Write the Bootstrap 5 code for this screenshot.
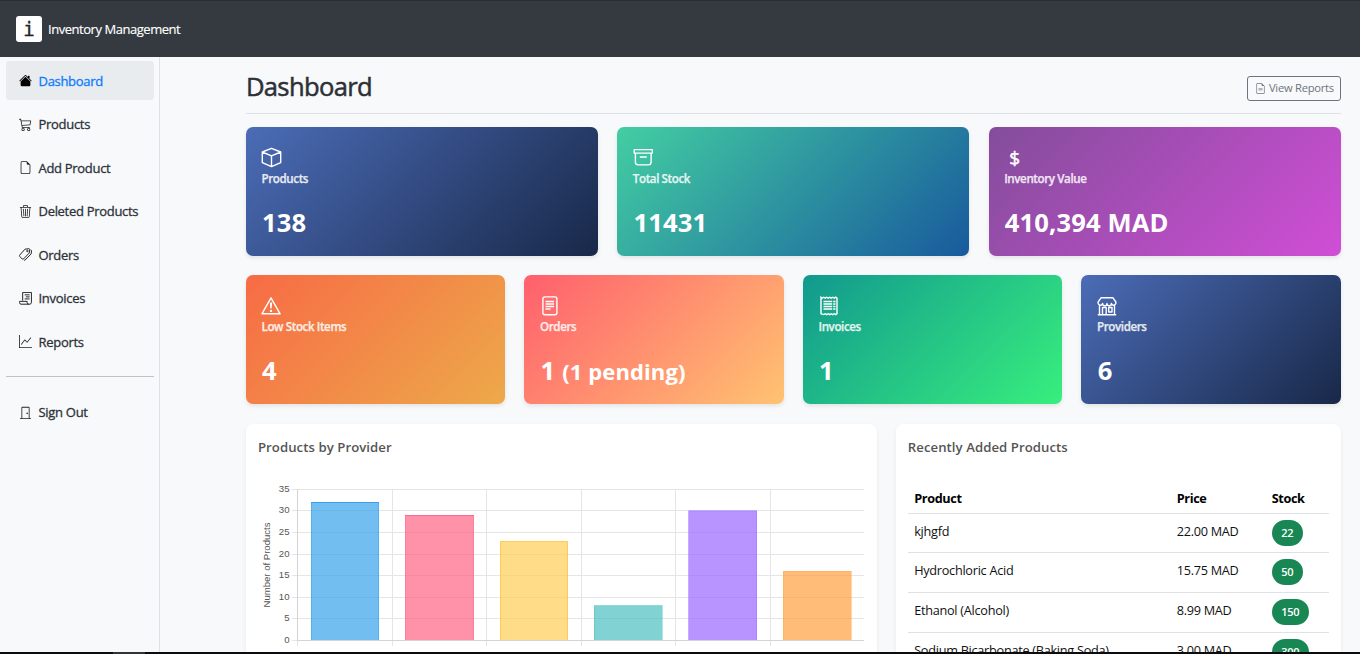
<!DOCTYPE html>
<html lang="en">
<head>
<meta charset="utf-8">
<meta name="viewport" content="width=device-width, initial-scale=1">
<title>Inventory Management</title>
<link href="https://cdn.jsdelivr.net/npm/bootstrap@5.3.0/dist/css/bootstrap.min.css" rel="stylesheet">
<style>
html{font-size:12.8px}
body{font-family:"Open Sans","Noto Sans",sans-serif;background:#f8f9fb;color:#333;height:100vh;overflow:hidden}
.topbar{height:57px;background:#343a40;border-top:1px solid #2a2d31;padding:0 16px}
.logo{width:26px;height:26px;background:#fff;border-radius:3px;color:#222;font:19px/27px "DejaVu Sans Mono",monospace;text-align:center;-webkit-text-stroke:.3px #222}
.brand{font-size:13px;letter-spacing:-.46px;margin:2px 0 0 6px;color:#fff;-webkit-text-stroke:.15px #fff}
.shell{height:595px;overflow:hidden}
.side{width:160px;flex:none;border-right:1px solid #dee2e6;padding:4px 5px 0 6px}
.side .nav-link{height:39px;margin-bottom:4.5px;padding:2px 0 0 13px;border-radius:3px;color:#2d3238;font-weight:500;font-size:13px;letter-spacing:-.3px;-webkit-text-stroke:.3px currentColor;display:flex;align-items:center;white-space:nowrap}
.side .nav-link svg{width:13px;height:13px;margin:-2px 6.500px 0 0;flex:none;color:#222}
.side .nav-link.active{background:#e9ecef;color:#0d7bff}
.side .nav-link.active svg{color:#000}
.side hr{margin:10.6px 0 15.5px;border-color:#212529;opacity:.25}
.content{padding:0 19.2px 0 85.9px}
.pagehead{height:57px;border-bottom:1px solid #dee2e6;padding-top:4px}
.pagehead h1{font-size:25.6px;font-weight:500;color:#2d3035;letter-spacing:-.66px;-webkit-text-stroke:.5px #2d3035}
.btn-rep{font-size:11.2px;height:25px;width:94px;padding:1px 0 0 1px;margin-top:2px;letter-spacing:-.25px;border-radius:3px;--bs-btn-color:#6c757d;display:flex;align-items:center;justify-content:center;white-space:nowrap}
.firstrow{margin-top:13px}
.stat{height:129px;border-radius:7px;padding:20px 15.6px 0;color:#fff;box-shadow:0 2px 4px rgba(0,0,0,.09)}
.stat svg{width:21px;height:21px;display:block}
.stat .coin{height:21px;padding-left:5px;font-size:19px;line-height:22px;-webkit-text-stroke:.5px #fff}
.stat .cap{font-size:11.6px;font-weight:600;line-height:16px;margin-top:3px;opacity:.87;letter-spacing:-.4px;-webkit-text-stroke:.25px #fff}
.stat .num{font-size:25.6px;font-weight:700;line-height:34px;margin:19px 0 0 .6px;letter-spacing:.12px}
.stat .num small{font-size:22px}
.g-blue{background:linear-gradient(135deg,#4b6cb7,#182848)}
.g-teal{background:linear-gradient(135deg,#43cea2,#185a9d)}
.g-purple{background:linear-gradient(135deg,#834d9b,#d04ed6)}
.g-orange{background:linear-gradient(135deg,#f76b45,#eda94a)}
.g-pink{background:linear-gradient(135deg,#ff5f6d,#ffc371)}
.g-green{background:linear-gradient(135deg,#11998e,#38ef7d)}
.lastrow{margin-top:20px}
.panel{background:#fff;border-radius:8px;height:300px;padding:12px;box-shadow:0 2px 5px rgba(0,0,0,.06)}
.panel h2{font-size:13.2px;font-weight:600;line-height:22px;margin:0;color:#555;letter-spacing:.05px}
.chart{display:block;margin-top:22px}
.chart text{font:9.6px "Liberation Sans",Arial,sans-serif;fill:#555}
.recent{margin-top:20px;font-size:12.7px;letter-spacing:-.27px;--bs-table-bg:transparent;--bs-table-color:#111;color:#111;table-layout:fixed}
.recent td,.recent th{height:40px;padding:6px 6.4px;line-height:22px}
.recent th{height:35px;padding:8px 6.4px 4px;font-weight:700;color:#000;letter-spacing:-.36px}
.recent tr:first-child td{height:39px}
.recent .badge{font-size:11px;line-height:26px;padding:0 9.7px;border-radius:13px;font-weight:600;vertical-align:top;background:#198754;letter-spacing:-.4px}
.taskline{height:2px;background:#0c0c0f;padding-left:113px}
.taskline span{display:block;width:32px;height:2px;background:#333}
</style>
</head>
<body>
<svg class="d-none">
<symbol id="house" viewBox="0 0 16 16"><path d="M8.707 1.5a1 1 0 0 0-1.414 0L.646 8.146a.5.5 0 0 0 .708.708L8 2.207l6.646 6.647a.5.5 0 0 0 .708-.708L13 5.793V2.5a.5.5 0 0 0-.5-.5h-1a.5.5 0 0 0-.5.5v1.293L8.707 1.5Z"/><path d="m8 3.293 6 6V13.500a1.500 1.500 0 0 1-1.500 1.500h-9A1.500 1.500 0 0 1 2 13.500V9.293l6-6Z"/></symbol>
<symbol id="cart" viewBox="0 0 16 16"><path d="M0 1.5A.5.5 0 0 1 .5 1H2a.5.5 0 0 1 .485.379L2.89 3H14.5a.5.5 0 0 1 .49.598l-1 5a.5.5 0 0 1-.465.401l-9.397.472L4.415 11H13a.5.5 0 0 1 0 1H4a.5.5 0 0 1-.491-.408L2.01 3.607 1.61 2H.5a.5.5 0 0 1-.5-.5zM3.102 4l.84 4.479 9.144-.459L13.89 4H3.102zM5 12a2 2 0 1 0 0 4 2 2 0 0 0 0-4zm7 0a2 2 0 1 0 0 4 2 2 0 0 0 0-4zm-7 1a1 1 0 1 1 0 2 1 1 0 0 1 0-2zm7 0a1 1 0 1 1 0 2 1 1 0 0 1 0-2z"/></symbol>
<symbol id="file" viewBox="0 0 16 16"><path d="M14 4.5V14a2 2 0 0 1-2 2H4a2 2 0 0 1-2-2V2a2 2 0 0 1 2-2h5.5L14 4.5zm-3 0A1.5 1.5 0 0 1 9.5 3V1H4a1 1 0 0 0-1 1v12a1 1 0 0 0 1 1h8a1 1 0 0 0 1-1V4.5h-2z"/></symbol>
<symbol id="trash" viewBox="0 0 16 16"><path d="M6.5 1h3a.5.5 0 0 1 .5.5v1H6v-1a.5.5 0 0 1 .5-.5ZM11 2.500v-1A1.500 1.500 0 0 0 9.500 0h-3A1.500 1.500 0 0 0 5 1.500v1H1.500a.5.5 0 0 0 0 1h.538l.853 10.660A2 2 0 0 0 4.885 16h6.230a2 2 0 0 0 1.994-1.840l.853-10.660h.538a.5.5 0 0 0 0-1H11Zm1.958 1-.846 10.580a1 1 0 0 1-.997.920h-6.230a1 1 0 0 1-.997-.920L3.042 3.500h9.916Zm-7.487 1a.5.5 0 0 1 .528.470l.5 8.500a.5.5 0 0 1-.998.060L5 5.030a.5.5 0 0 1 .470-.530Zm5.058 0a.5.5 0 0 1 .470.530l-.5 8.500a.5.5 0 1 1-.998-.060l.5-8.500a.5.5 0 0 1 .528-.470ZM8 4.500a.5.5 0 0 1 .5.5v8.500a.5.5 0 0 1-1 0V5a.5.5 0 0 1 .5-.5Z"/></symbol>
<symbol id="tags" viewBox="0 0 16 16"><g fill="none" stroke="currentColor" stroke-width="1.200" stroke-linejoin="round"><path d="M7.300 1.500 12 .8q1 0 1 1l-.4 4.400L5.500 13.500q-.8.7-1.600 0L.8 10.300q-.6-.8 0-1.500z"/><path d="M14.200 2.300q1.300.2 1.200 1.300l-.4 3.600-7.500 7.600q-.7.6-1.500 0"/><circle cx="10.300" cy="3.700" r=".9"/></g></symbol>
<symbol id="scroll" viewBox="0 0 16 16"><g fill="none" stroke="currentColor" stroke-width="1.200"><path d="M4.500 10.500v-10h10.800v12.300q0 2.200-2.200 2.200H2.500Q.7 15 .7 12.900v-1.400H10v1.700q.2 1.800 2 1.800M7 3.500h6M8.500 6h4.500M7 8.500h6"/></g></symbol>
<symbol id="graph" viewBox="0 0 16 16"><path d="M0 0h1v15h15v1H0V0Zm14.817 3.113a.5.5 0 0 1 .070.704l-4.500 5.500a.5.5 0 0 1-.740.037L7.060 6.767l-3.656 5.027a.5.5 0 0 1-.808-.588l4-5.500a.5.5 0 0 1 .758-.060l2.609 2.610 4.150-5.073a.5.5 0 0 1 .704-.070Z"/></symbol>
<symbol id="door" viewBox="0 0 16 16"><path d="M3 2a1 1 0 0 1 1-1h8a1 1 0 0 1 1 1v13h1.500a.5.5 0 0 1 0 1h-13a.5.5 0 0 1 0-1H3V2zm1 13h8V2H4v13z"/><path d="M9 9a1 1 0 1 0 2 0 1 1 0 0 0-2 0z"/></symbol>
<symbol id="filetext" viewBox="0 0 16 16"><use href="#file"/><path d="M5 7.500h6v1H5zM5 9.500h6v1H5z"/></symbol>
<symbol id="box" viewBox="0 0 21 21"><path d="M10.500 1.300 19.700 5v10.600l-9.200 4-9.200-4V5zM1.300 5l9.200 3.900L19.700 5M10.500 8.900v10.600" fill="none" stroke="currentColor" stroke-width="1.400" stroke-linejoin="round"/></symbol>
<symbol id="archive" viewBox="0 0 21 21"><path d="M1.200 2.600h18.100v3.500H1.200zM2.400 6.100v8.900q0 2.900 2.900 2.900h9.900q2.900 0 2.900-2.900V6.100M7.300 10h6" fill="none" stroke="currentColor" stroke-width="1.400" stroke-linejoin="round" stroke-linecap="round"/></symbol>
<symbol id="warn" viewBox="0 0 21 21"><path d="M10 2.800 19.100 18.800H.9z" fill="none" stroke="currentColor" stroke-width="1.400" stroke-linejoin="round"/><path d="M8.800 7.600h2.400l-.6 6H9.400z"/><circle cx="10" cy="15.900" r="1.200"/></symbol>
<symbol id="doc" viewBox="0 0 21 21"><rect x="2.900" y="1.900" width="14" height="17.800" rx="2" fill="none" stroke="currentColor" stroke-width="1.400"/><path d="M5.500 6.500h8.500M5.500 9h8.500M5.500 11.500h8.500M5.500 14h5" stroke="currentColor" stroke-width="1.300"/></symbol>
<symbol id="receipt" viewBox="0 0 21 21"><path d="M2 2.200l1.200.9 1.500-.9 1.500.9 1.500-.9 1.500.9 1.500-.9 1.500.9 1.500-.9 1.500.9 1.500-.9 1.300.9v15.600l-1.300.9-1.500-.9-1.500.9-1.500-.9-1.500.9-1.500-.9-1.500.9-1.500-.9-1.500.9L2 18.700z" fill="none" stroke="currentColor" stroke-width="1.400"/><path d="M4.500 6.500h8.700M4.500 9h8.700M4.500 11.500h8.700M4.500 14h8.700M14.200 6.500h2.300M14.200 9h2.300M14.200 11.500h2.300M14.200 14h2.300" stroke="currentColor" stroke-width="1.500"/></symbol>
<symbol id="shop" viewBox="0 0 21 21"><path d="M4 2.800h12L18.900 7v1.200a2.300 2.300 0 0 1-4.500.3 2.200 2.200 0 0 1-4.400 0 2.200 2.200 0 0 1-4.400 0A2.300 2.300 0 0 1 1.100 8.200V7zM2.500 10.300v9M17.500 10.300v9M.8 19.800h18.400M5.500 19.500v-7h3.700v7M11.700 12.500h3.300v4.500h-3.300z" fill="none" stroke="currentColor" stroke-width="1.400" stroke-linejoin="round"/></symbol>
</svg>

<header class="topbar d-flex align-items-center"><div class="logo">i</div><span class="brand">Inventory Management</span></header>
<div class="shell d-flex">
<nav class="side"><div class="nav flex-column">
<a class="nav-link active" href="#"><svg fill="currentColor"><use href="#house"/></svg>Dashboard</a>
<a class="nav-link" href="#"><svg fill="currentColor"><use href="#cart"/></svg>Products</a>
<a class="nav-link" href="#"><svg fill="currentColor"><use href="#file"/></svg>Add Product</a>
<a class="nav-link" href="#"><svg fill="currentColor"><use href="#trash"/></svg>Deleted Products</a>
<a class="nav-link" href="#"><svg fill="currentColor"><use href="#tags"/></svg>Orders</a>
<a class="nav-link" href="#"><svg fill="currentColor"><use href="#scroll"/></svg>Invoices</a>
<a class="nav-link" href="#"><svg fill="currentColor"><use href="#graph"/></svg>Reports</a>
</div><hr><a class="nav-link" href="#"><svg fill="currentColor"><use href="#door"/></svg>Sign Out</a></nav>
<main class="content flex-grow-1">
<div class="pagehead d-flex align-items-center justify-content-between"><h1 class="m-0">Dashboard</h1><button class="btn btn-outline-secondary btn-rep"><svg width="11" height="11" class="me-1" fill="currentColor"><use href="#filetext"/></svg>View Reports</button></div>
<div class="row gx-4 firstrow row-cols-3">
<div class="col"><div class="stat g-blue"><svg fill="currentColor"><use href="#box"/></svg><div class="cap">Products</div><div class="num">138</div></div></div>
<div class="col"><div class="stat g-teal"><svg fill="currentColor"><use href="#archive"/></svg><div class="cap">Total Stock</div><div class="num">11431</div></div></div>
<div class="col"><div class="stat g-purple"><div class="coin">$</div><div class="cap">Inventory Value</div><div class="num">410,394 MAD</div></div></div>
</div>
<div class="row gx-4 mt-4 row-cols-4">
<div class="col"><div class="stat g-orange"><svg fill="currentColor"><use href="#warn"/></svg><div class="cap">Low Stock Items</div><div class="num">4</div></div></div>
<div class="col"><div class="stat g-pink"><svg fill="currentColor"><use href="#doc"/></svg><div class="cap">Orders</div><div class="num">1 <small>(1 pending)</small></div></div></div>
<div class="col"><div class="stat g-green"><svg fill="currentColor"><use href="#receipt"/></svg><div class="cap">Invoices</div><div class="num">1</div></div></div>
<div class="col"><div class="stat g-blue"><svg fill="currentColor"><use href="#shop"/></svg><div class="cap">Providers</div><div class="num">6</div></div></div>
</div>
<div class="row gx-4 lastrow">
<div class="col-7"><section class="panel"><h2>Products by Provider</h2>
<svg class="chart" width="607" height="172" viewBox="258 480 607 172">
<g stroke="#e5e5e5" shape-rendering="crispEdges"><path d="M292 489.500H864M292 510.500H864M292 532.500H864M292 554.500H864M292 575.500H864M292 597.500H864M292 618.500H864M292 640.500H864M392.500 489V646M486.500 489V646M581.500 489V646M675.500 489V646M770.500 489V646M297.500 641V646" fill="none"/></g>
<g fill-opacity=".7"><path fill="#36a2eb" d="M311 502h68v138h-68z"/><path fill="#ff6384" d="M405 515h69v125h-69z"/><path fill="#ffcd56" d="M500 541h68v99h-68z"/><path fill="#4bc0c0" d="M594 605.500h68.600V640H594z"/><path fill="#9966ff" d="M688.500 510.500h68.500V640h-68.500z"/><path fill="#ff9f40" d="M783 571h68.600v69H783z"/></g>
<g fill="none" stroke-width="1"><path stroke="#36a2eb" stroke-opacity=".5" d="M311.500 640V502.500h67V640"/><path stroke="#36a2eb" d="M311 502.500h68"/><path stroke="#ff6384" stroke-opacity=".4" d="M405.500 640V515.500h68V640"/><path stroke="#ff6384" stroke-opacity=".8" d="M405 515.500h69"/><path stroke="#ffcd56" d="M500.500 640V541.500h67V640"/><path stroke="#4bc0c0" stroke-opacity=".4" d="M594.500 640V605.500h68"/><path stroke="#9966ff" stroke-opacity=".3" d="M688.500 640V511h68V640"/><path stroke="#ff9f40" stroke-opacity=".3" d="M783.500 640v-68.500h68"/></g>
<path d="M297.500 489V640.500H864" fill="none" stroke="#d4d4d4" shape-rendering="crispEdges"/>
<g text-anchor="end"><text x="289.500" y="492">35</text><text x="289.500" y="513">30</text><text x="289.500" y="535">25</text><text x="289.500" y="557">20</text><text x="289.500" y="578">15</text><text x="289.500" y="600">10</text><text x="289.500" y="621">5</text><text x="289.500" y="643">0</text></g>
<text transform="translate(270 607.500) rotate(-90)" textLength="85">Number of Products</text>
</svg></section></div>
<div class="col-5"><section class="panel"><h2>Recently Added Products</h2>
<table class="table recent"><colgroup><col style="width:262.500px"><col style="width:95px"><col></colgroup>
<thead><tr><th>Product</th><th>Price</th><th>Stock</th></tr></thead>
<tbody>
<tr><td>kjhgfd</td><td>22.00 MAD</td><td><span class="badge">22</span></td></tr>
<tr><td>Hydrochloric Acid</td><td>15.75 MAD</td><td><span class="badge">50</span></td></tr>
<tr><td>Ethanol (Alcohol)</td><td>8.99 MAD</td><td><span class="badge">150</span></td></tr>
<tr><td>Sodium Bicarbonate (Baking Soda)</td><td>3.00 MAD</td><td><span class="badge">300</span></td></tr>
</tbody></table></section></div>
</div>
</main>
</div>
<div class="taskline"><span></span></div>
<script src="https://cdn.jsdelivr.net/npm/bootstrap@5.3.0/dist/js/bootstrap.bundle.min.js"></script>
</body>
</html>
